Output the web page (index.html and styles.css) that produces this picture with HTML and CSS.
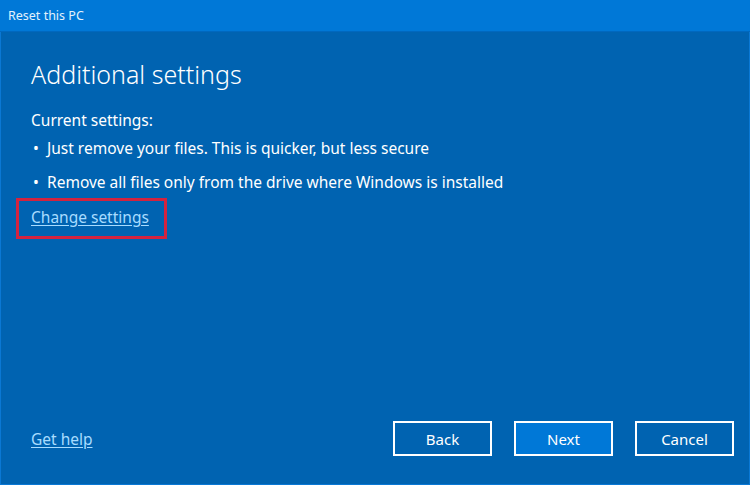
FILE: index.html
```html
<!DOCTYPE html>
<html lang="en">
<head>
<meta charset="utf-8">
<title>Reset this PC</title>
<link rel="stylesheet" href="styles.css">
</head>
<body>
<div class="window">
  <div class="titlebar">Reset this PC</div>
  <div class="content">
    <h1 class="heading">Additional settings</h1>
    <p class="label">Current settings:</p>
    <ul class="list">
      <li><span class="dot">•</span>Just remove your files. This is quicker, but less secure</li>
      <li><span class="dot">•</span>Remove all files only from the drive where Windows is installed</li>
    </ul>
    <div class="highlight"><a class="link" href="#">Change settings</a></div>
    <div class="footer">
      <a class="link" href="#">Get help</a>
      <div class="buttons">
        <button class="btn">Back</button>
        <button class="btn primary">Next</button>
        <button class="btn">Cancel</button>
      </div>
    </div>
  </div>
</div>
</body>
</html>
```
FILE: styles.css
```css
html, body {
  margin: 0;
  padding: 0;
  background: #0063b1;
}
.window {
  width: 750px;
  height: 485px;
  box-sizing: border-box;
  border: 1px solid #0a78d4;
  border-top: none;
  background: #0063b1;
  display: flex;
  flex-direction: column;
  font-family: "Noto Sans", "Open Sans", sans-serif;
  color: #ffffff;
}
.titlebar {
  height: 31px;
  line-height: 31px;
  background: #0078d7;
  border-bottom: 1px solid #0068bf;
  padding-left: 8px;
  font-size: 12.5px;
  color: #e3f1fc;
  margin: 0 -1px;
}
.content {
  flex: 1;
  display: flex;
  flex-direction: column;
  padding: 26px 15px 0 30px;
}
.heading {
  margin: 0;
  font-size: 25px;
  font-weight: 300;
  line-height: 32px;
}
.label {
  margin: 20px 0 0;
  font-size: 15.5px;
  line-height: 20px;
}
.list {
  list-style: none;
  margin: 8px 0 0;
  padding: 0;
  display: flex;
  flex-direction: column;
  gap: 14px;
  font-size: 15.5px;
  line-height: 20px;
}
.dot {
  display: inline-block;
  width: 16px;
  padding-left: 2px;
  box-sizing: border-box;
}
.highlight {
  margin: 6px 0 0 -15px;
  width: 151px;
  height: 41px;
  box-sizing: border-box;
  border: 3px solid #d3233f;
  padding: 5px 0 0 12px;
}
.link {
  color: #a8dcff;
  font-size: 15.5px;
  line-height: 20px;
  text-decoration: underline;
  text-underline-offset: 2px;
}
.footer {
  margin-top: auto;
  margin-bottom: 28px;
  display: flex;
  align-items: center;
  justify-content: space-between;
}
.buttons {
  display: flex;
  gap: 22px;
}
.btn {
  width: 99px;
  height: 35px;
  box-sizing: border-box;
  border: 2px solid #ffffff;
  background: transparent;
  color: #ffffff;
  font-family: "Noto Sans", "Open Sans", sans-serif;
  font-size: 15px;
  padding: 0;
}
.btn.primary {
  background: #0078d7;
}
```
